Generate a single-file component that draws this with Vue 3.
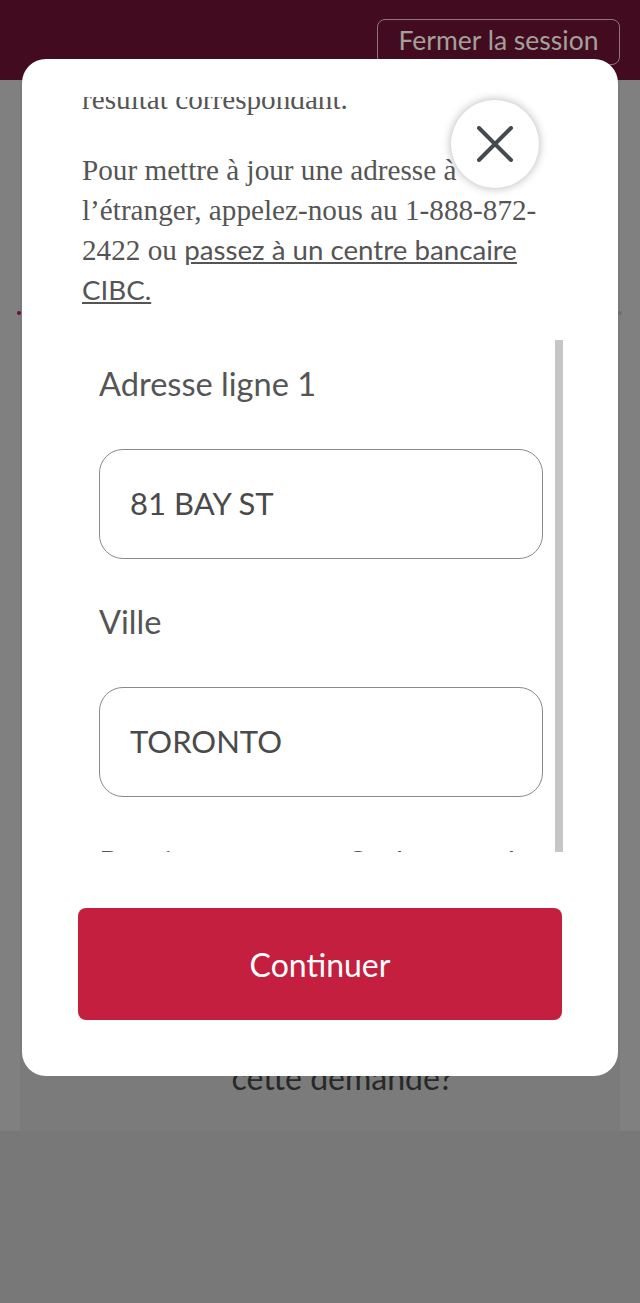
<script setup>
const fields = [
  { label: 'Adresse ligne 1', value: '81 BAY ST' },
  { label: 'Ville', value: 'TORONTO' },
]
</script>

<template>
  <div class="page">
    <header class="top">
      <button class="logout">Fermer la session</button>
    </header>
    <main class="main">
      <div class="steps"><span class="dot red"></span><span class="dot grey"></span></div>
      <section class="card">
        <p class="question">cette demande?</p>
      </section>
    </main>
    <div class="foot"></div>

    <div class="modal">
      <div class="intro">
        <p class="first">résultat correspondant.</p>
        <p>Pour mettre à jour une adresse à l’étranger, appelez-nous au 1-888-872-2422 ou <a class="link">passez à un centre bancaire CIBC.</a></p>
      </div>
      <div class="panel">
        <form class="form">
          <div v-for="f in fields" :key="f.label" class="group">
            <label class="label">{{ f.label }}</label>
            <div class="input">{{ f.value }}</div>
          </div>
          <div class="pair">
            <label class="label">Province</label>
            <label class="label">Code postal</label>
          </div>
        </form>
        <div class="bar"></div>
      </div>
      <button class="cta">Continuer</button>
      <button class="close" aria-label="Fermer">
        <svg width="36" height="36" viewBox="0 0 36 36"><path d="M2 2 L34 34 M34 2 L2 34" stroke="#444a4e" stroke-width="4" stroke-linecap="round" fill="none"/></svg>
      </button>
    </div>
  </div>
</template>

<style>
html, body { margin: 0; padding: 0; }
</style>

<style scoped>
.page {
  position: relative;
  height: 1303px;
  overflow: hidden;
  background: #787878;
  font-family: Lato, "Noto Sans", sans-serif;
  display: flex;
  flex-direction: column;
}
.top {
  height: 80px;
  flex: none;
  background: #420b20;
  display: flex;
  justify-content: flex-end;
  align-items: flex-start;
  padding: 19px 20px 0 0;
  box-sizing: border-box;
}
.logout {
  width: 243px;
  height: 46px;
  padding: 0 0 4px;
  border: 1.5px solid #8d7580;
  border-radius: 8px;
  background: transparent;
  color: #a3a09a;
  font: 26.5px Lato, sans-serif;
}
.main {
  height: 1051px;
  flex: none;
  background: #808080;
  position: relative;
  padding: 0 20px;
  box-sizing: border-box;
  display: flex;
}
.steps {
  position: absolute;
  left: 17px;
  right: 18px;
  top: 231px;
  display: flex;
  justify-content: space-between;
}
.dot { width: 4px; height: 4px; border-radius: 50%; }
.red { background: #6e0f2e; }
.grey { background: #6e6e6e; }
.card {
  flex: 1;
  background: #7b7b7b;
  display: flex;
  justify-content: center;
}
.question {
  margin: 978px 0 0 45px;
  font-size: 32px;
  line-height: 40px;
  color: #26282a;
}
.modal {
  position: absolute;
  left: 22px;
  top: 59px;
  width: 596px;
  height: 1017px;
  box-sizing: border-box;
  background: #fff;
  border-radius: 24px;
  padding: 38px 56px 56px;
  display: flex;
  flex-direction: column;
}
.intro {
  height: 214px;
  overflow: hidden;
  padding: 0 18px 0 4px;
  font-family: "Liberation Serif", serif;
  font-size: 29.2px;
  line-height: 40px;
  color: #555;
}
.intro p { margin: 31px 0 0; }
.intro .first { margin-top: -18px; }
.link { color: #555; text-decoration: underline; font-family: Lato, sans-serif; font-size: 27.7px; }
.panel {
  margin-top: 29px;
  height: 512px;
  display: flex;
  gap: 12px;
  padding-left: 21px;
  flex: none;
}
.form {
  flex: none;
  width: 444px;
  height: 512px;
  overflow: hidden;
  padding-top: 24px;
  box-sizing: border-box;
}
.group { margin-bottom: 43px; }
.label {
  display: block;
  font-size: 32.6px;
  line-height: 40px;
  color: #555;
}
.input {
  margin-top: 45px;
  height: 110px;
  box-sizing: border-box;
  border: 1.5px solid #8a8a8a;
  border-radius: 24px;
  padding: 0 0 2px 30px;
  display: flex;
  align-items: center;
  font-size: 31px;
  color: #4a4a4a;
}
.pair {
  display: grid;
  grid-template-columns: 246px 1fr;
  padding-top: 3px;
}
.bar { width: 8px; height: 512px; flex: none; background: #c6c6c6; }
.cta {
  margin-top: 56px;
  height: 112px;
  flex: none;
  border: 0;
  border-radius: 8px;
  background: #c41f3e;
  color: #fff;
  font: 32px Lato, sans-serif;
}
.close {
  position: absolute;
  left: 429px;
  top: 41px;
  width: 88px;
  height: 88px;
  padding: 0;
  border: 0;
  border-radius: 50%;
  background: #fff;
  box-shadow: 0 0 10px rgba(0, 0, 0, 0.3);
  display: flex;
  align-items: center;
  justify-content: center;
}
</style>
